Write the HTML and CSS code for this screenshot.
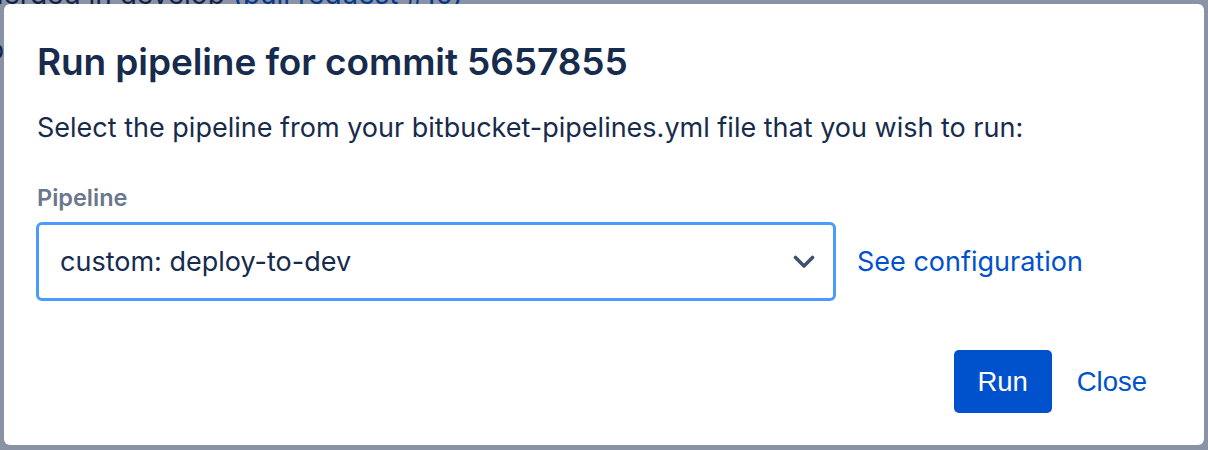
FILE: index.html
```html
<!DOCTYPE html>
<html>
<head>
<meta charset="utf-8">
<link rel="stylesheet" href="styles.css">
</head>
<body>
<div class="page">
  <p class="behind-line">merged in develop <a class="behind-link">(pull request #10)</a></p>
  <span class="behind-glyph">p</span>
</div>
<div class="blanket">
  <div class="dialog" role="dialog">
    <h1 class="title">Run pipeline for commit 5657855</h1>
    <p class="intro">Select the pipeline from your bitbucket-pipelines.yml file that you wish to run:</p>
    <label class="label">Pipeline</label>
    <div class="field-row">
      <div class="select">
        <span class="select-value">custom: deploy-to-dev</span>
        <svg class="chevron" width="22" height="14" viewBox="0 0 22 14"><polyline points="2.5,2.5 11,11 19.5,2.5" fill="none" stroke="#42526e" stroke-width="3.6" stroke-linecap="round" stroke-linejoin="round"/></svg>
      </div>
      <a class="link">See configuration</a>
    </div>
    <div class="footer">
      <button class="btn-primary">Run</button>
      <button class="btn-link">Close</button>
    </div>
  </div>
</div>
</body>
</html>
```
FILE: styles.css
```css
html, body {
  margin: 0;
  padding: 0;
  background: #ffffff;
  font-family: Inter, "Noto Sans", sans-serif;
  color: #172b4d;
}
.page {
  position: relative;
  height: 450px;
  overflow: hidden;
}
.behind-line {
  position: absolute;
  left: -21px;
  top: -21px;
  margin: 0;
  font-size: 28px;
  line-height: 30px;
  color: #172b4d;
  white-space: nowrap;
}
.behind-link { color: #0052cc; }
.behind-glyph {
  position: absolute;
  left: -12px;
  top: 34px;
  font-size: 26px;
  color: #172b4d;
}
.blanket {
  position: fixed;
  inset: 0;
  background: rgba(9, 30, 66, 0.48);
  padding: 4px 4px 5px 4px;
  display: flex;
}
.dialog {
  flex: 1;
  background: #ffffff;
  border-radius: 6px;
  padding: 0 33px 0 32px;
  display: flex;
  flex-direction: column;
}
.title {
  margin: 36px 0 0 1px;
  font-size: 37px;
  line-height: 44px;
  font-weight: 600;
  color: #172b4d;
  letter-spacing: -0.1px;
}
.intro {
  margin: 28px 0 0 1px;
  font-size: 27px;
  line-height: 32px;
  color: #172b4d;
}
.label {
  margin: 41px 0 0 1px;
  font-size: 23.5px;
  line-height: 26px;
  font-weight: 600;
  color: #6b778c;
}
.field-row {
  margin-top: 11px;
  display: flex;
  align-items: center;
  gap: 21px;
}
.select {
  width: 800px;
  height: 79px;
  box-sizing: border-box;
  border: 3px solid #4c9aff;
  border-radius: 6px;
  display: flex;
  align-items: center;
  padding: 0 18px 0 21px;
}
.select-value {
  flex: 1;
  font-size: 27px;
  color: #172b4d;
}
.chevron {
  display: block;
}
.link {
  font-size: 27px;
  color: #0052cc;
}
.footer {
  margin-top: 49px;
  display: flex;
  justify-content: flex-end;
  align-items: center;
  gap: 5px;
  padding-right: 4px;
}
.btn-primary, .btn-link {
  font-family: "Liberation Sans", Arial, sans-serif;
  font-size: 27.5px;
  border: none;
  height: 63px;
  border-radius: 5px;
  padding: 0 20px;
  cursor: pointer;
}
.btn-primary {
  background: #0052cc;
  color: #ffffff;
  width: 98px;
}
.btn-link {
  background: transparent;
  color: #0052cc;
}
```
